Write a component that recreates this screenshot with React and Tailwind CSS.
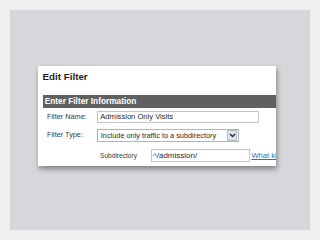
import React from "react";

export default function App() {
  const font = { fontFamily: '"Liberation Sans", Arial, sans-serif' };
  return (
    <div className="w-[320px] h-[240px] bg-[#eeeff1] p-[10px]" style={font}>
      <div className="w-[300px] h-[220px] bg-[#d6d7da] pt-[56px] pl-[28px]">
        <div className="w-[238px] h-[100px] bg-white overflow-hidden shadow-[1px_3px_5px_rgba(0,0,0,0.4)] flex flex-col">
          <div className="ml-[4.5px] mt-[4.6px] h-[12px] leading-[12px] text-[9.8px] font-bold text-[#1e1e1e] whitespace-nowrap">
            Edit Filter
          </div>
          <div className="ml-[4.7px] mt-[12.4px] h-[13px] bg-[#606060] text-white font-bold text-[8.3px] leading-[13px] pl-[2px] whitespace-nowrap">
            Enter Filter Information
          </div>
          <div className="flex items-center mt-[3px] h-[12.3px]">
            <div className="shrink-0 ml-[9px] w-[50.3px] text-[7.3px] text-[#3a3a3a] whitespace-nowrap">Filter Name:</div>
            <div className="shrink-0 w-[161.7px] h-[12.3px] border border-[#c4c4c4] bg-white flex items-center pl-[2px] text-[7.6px] text-[#2a2a2a] whitespace-nowrap overflow-hidden">
              Admission Only Visits
            </div>
          </div>
          <div className="flex items-center mt-[5.7px] h-[12.7px]">
            <div className="shrink-0 ml-[9px] w-[50.3px] text-[7.3px] text-[#3a3a3a] whitespace-nowrap">Filter Type:</div>
            <div className="shrink-0 w-[141.4px] h-[12.7px] border border-[#a9b3c2] bg-white flex items-center text-[7.35px] text-[#2a2a2a] whitespace-nowrap overflow-hidden">
              <div className="flex-1 min-w-0 pl-[2.5px] overflow-hidden">Include only traffic to a subdirectory</div>
              <div className="shrink-0 w-[10px] h-[10.7px] mr-[0.5px] bg-[#dfe4ec] border border-[#b4bdca] flex items-center justify-center">
                <svg width="7" height="5" viewBox="0 0 7 5">
                  <path d="M1 1 L3.5 3.6 L6 1" fill="none" stroke="#1f2937" strokeWidth="1.4" />
                </svg>
              </div>
            </div>
          </div>
          <div className="flex items-center mt-[7.3px] h-[13.3px]">
            <div className="shrink-0 ml-[62px] w-[50.7px] text-[6.6px] text-[#3a3a3a] whitespace-nowrap">Subdirectory</div>
            <div className="shrink-0 w-[99px] h-[13.3px] border border-[#c4c4c4] bg-white flex items-center pl-[1.3px] text-[8px] text-[#2a2a2a] whitespace-nowrap overflow-hidden">
              ^/admission/
            </div>
            <div className="shrink-0 ml-[1.7px] text-[7.6px] text-[#2f6fbf] underline whitespace-nowrap">What kind of</div>
          </div>
        </div>
      </div>
    </div>
  );
}
